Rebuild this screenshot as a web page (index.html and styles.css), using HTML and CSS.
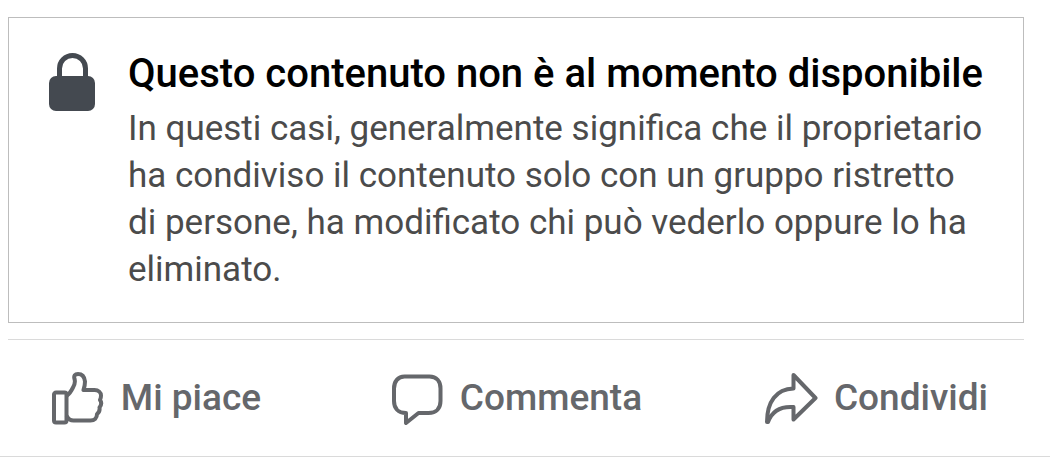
FILE: index.html
```
<!DOCTYPE html>
<html lang="it">
<head>
    <meta charset="UTF-8">
    <meta name="viewport" content="width=device-width, initial-scale=1">
    <title>Contenuto non disponibile</title>
    <link rel="stylesheet" href="styles.css">
</head>
<body>
    <article class="post">
        <section class="notice">
            <svg class="lock" viewBox="0 0 48 60" aria-hidden="true">
                <path d="M10.500 27V17.500a13 13 0 0 1 26 0V27" fill="none" stroke="#444950" stroke-width="5"/>
                <rect x="0" y="25" width="46" height="35" rx="7" fill="#444950"/>
            </svg>
            <div class="message">
                <h1 class="title">Questo contenuto non è al momento disponibile</h1>
                <p class="text">In questi casi, generalmente significa che il proprietario ha condiviso il contenuto solo con un gruppo ristretto di persone, ha modificato chi può vederlo oppure lo ha eliminato.</p>
            </div>
        </section>

        <div class="actions">
            <button class="action" type="button">
                <svg class="icon" viewBox="0 0 54 54" aria-hidden="true">
                    <path d="M5 21.500h8.500a2 2 0 0 1 2 2v26a2 2 0 0 1-2 2H5a2 2 0 0 1-2-2v-26a2 2 0 0 1 2-2z"/>
                    <path d="M16 24.500c3-2 4.500-5 6-8 2-3.500 2.500-5.500 1.500-8.500-1-3.500.5-5 3.500-5 4.500 0 6.500 3 7 7.500 0 3-.5 5.500-1.500 8.500h11c4 0 6.500 2.500 6.500 5.500 0 2-.5 3.500-1 4.500 1.500 2 1.500 5-.5 7.500.5 3-.5 5-2.500 6.500 0 4-2.500 6.500-6.500 6.500H22.500c-3 0-5-1-6.500-4"/>
                </svg>
                <span>Mi piace</span>
            </button>
            <button class="action" type="button">
                <svg class="icon" viewBox="0 0 54 54" aria-hidden="true">
                    <path d="M14.500 5.500h25c7 0 11 5 11 12v12.500c0 7-4 12-12 12H28.500L16 52V42C8 42 4 37 4 30V17.500c0-7 4-12 10.500-12z"/>
                </svg>
                <span>Commenta</span>
            </button>
            <button class="action" type="button">
                <svg class="icon" viewBox="0 0 54 54" aria-hidden="true">
                    <path d="M29.500 4l22 23-22 21.500V36C16 35 8 40 4 51H3C3 31 12 18 29.500 17.500z"/>
                </svg>
                <span>Condividi</span>
            </button>
        </div>
    </article>
</body>
</html>
```
FILE: styles.css
```
body {
    margin: 0;
    background: #fff;
    font-family: Roboto, "Liberation Sans", sans-serif;
}

.post {
    padding: 17px 26px 0 8px;
    border-bottom: 1px solid #dadada;
}

.notice {
    display: flex;
    gap: 31px;
    padding: 32px 34px 29px 40px;
    border: 1px solid #bdbdbd;
}

.lock {
    flex: none;
    width: 48px;
    height: 60px;
    margin-top: 1px;
}

.message {
    flex: 1;
}

.title {
    margin: 0 0 8px;
    color: #000;
    font-size: 40px;
    font-weight: 500;
    line-height: 47px;
}

.text {
    margin: 0;
    color: #4b4b4b;
    font-size: 35px;
    line-height: 47px;
}

/* like, comment, share */
.actions {
    display: grid;
    grid-template-columns: repeat(3, 1fr);
    gap: 64px;
    margin-top: 16px;
    border-top: 1px solid #dadada;
}

.action {
    display: flex;
    align-items: center;
    justify-content: center;
    gap: 16px;
    padding: 31px 0;
    border: 0;
    background: none;
    color: #65676b;
    font-family: inherit;
    font-size: 37px;
    font-weight: 500;
    line-height: 54px;
    white-space: nowrap;
    cursor: pointer;
}

.icon {
    flex: none;
    width: 54px;
    height: 54px;
    fill: none;
    stroke: #65676b;
    stroke-width: 4;
    stroke-linejoin: round;
    stroke-linecap: round;
}
```
